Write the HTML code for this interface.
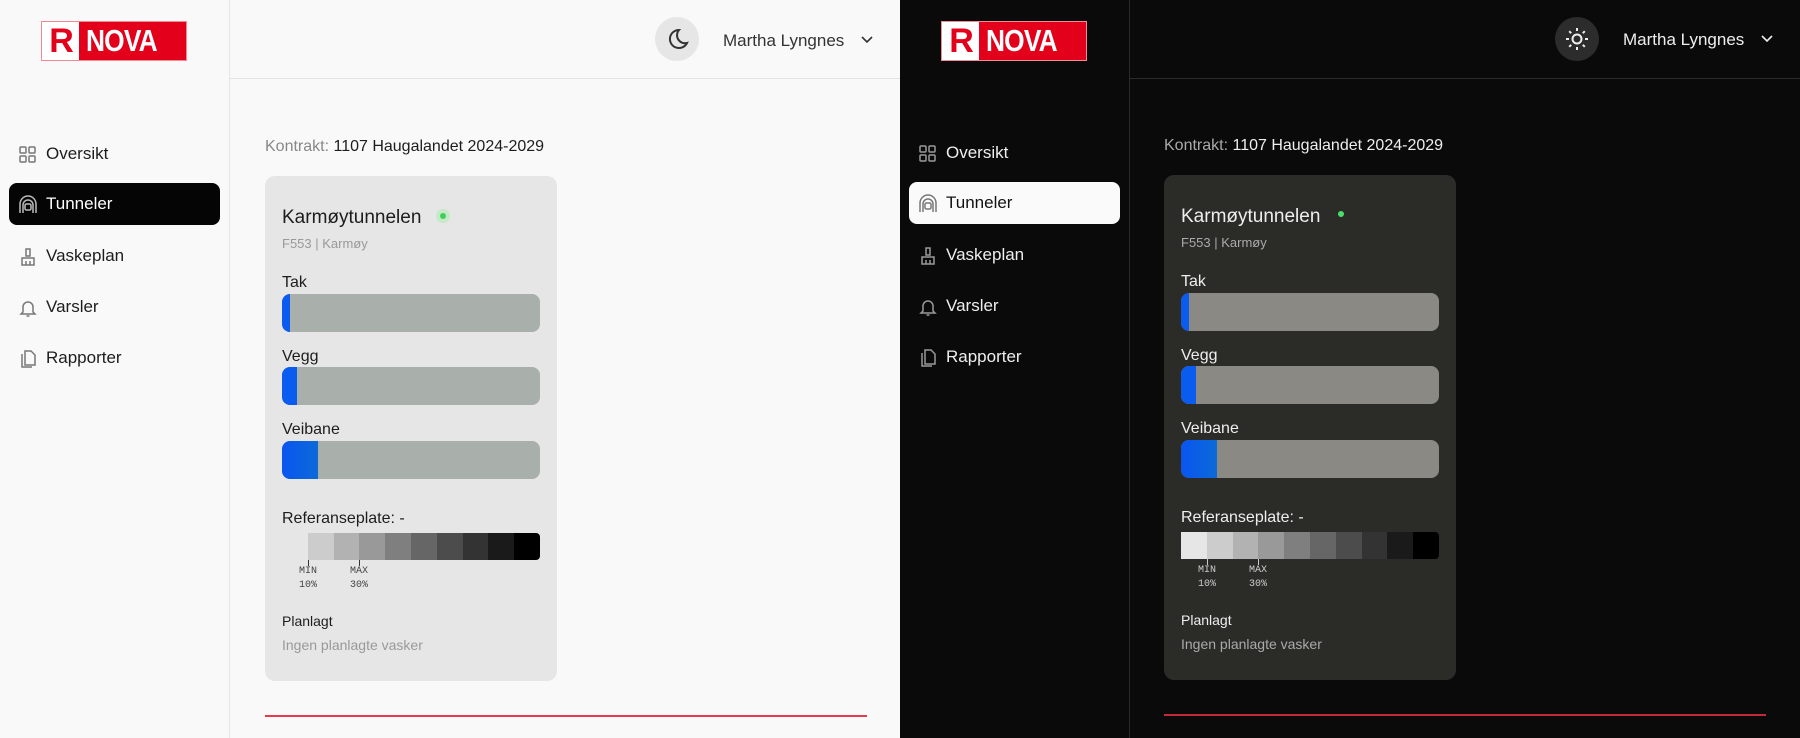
<!DOCTYPE html>
<html><head><meta charset="utf-8"><style>
*{box-sizing:border-box;margin:0;padding:0}
body{width:1800px;height:738px;overflow:hidden;font-family:"Liberation Sans",sans-serif;position:relative}
.p{position:absolute;top:0;width:900px;height:738px;overflow:hidden}
.a{position:absolute;white-space:nowrap}
.l{background:#f9f9f9;color:#1d1d1d}
.d{background:#0a0a0a;color:#eee}
.sb{position:absolute;left:0;top:0;width:230px;height:738px;border-right:1px solid #e6e6e6}
.d .sb{border-right-color:#2a2a2a}
.hd{position:absolute;left:230px;right:0;top:78px;height:1px;background:#e3e3e3}
.d .hd{background:#2a2a2a}
.logo{position:absolute;left:41px;top:21px;width:146px;height:40px;background:#e2001a;border:1px solid #f08a95}
.logo .r{position:absolute;left:0;top:0;width:37px;height:38px;background:#fff;color:#e2001a;font:bold 34px/38px "Liberation Sans";text-align:center;letter-spacing:-2px}
.logo .n{position:absolute;left:44px;top:0;color:#fff;font:bold 31px/38px "Liberation Sans";letter-spacing:-1px;transform:scaleX(.85);transform-origin:left}
.btn{position:absolute;left:655px;top:17px;width:44px;height:44px;border-radius:50%;background:#e6e6e6}
.d .btn{background:#2c2c2c}
.nav{position:absolute;left:9px;width:211px;height:42px;border-radius:8px;font-size:17px;line-height:42px;padding-left:37px}
.nav svg{position:absolute;left:9px;top:12px}
.l .act{background:#050505;color:#fff}
.d .act{background:#fafafa;color:#111}
.card{position:absolute;left:265px;top:176px;width:292px;height:505px;border-radius:10px;background:#e5e6e5}
.d .card{background:#2b2b28}
.bar{position:absolute;left:17px;width:258px;height:38px;border-radius:8px;background:#a9afab;overflow:hidden}
.d .bar{background:#8a8984}
.bar i{position:absolute;left:0;top:0;bottom:0;background:#0a5cf0}
.lbl{position:absolute;left:17px;font-size:16px}
.gs{position:absolute;left:17px;top:357px;width:258px;height:27px;display:flex;border-radius:0 4px 4px 0;overflow:hidden}
.gs span{flex:1}
.sm{font-family:"Liberation Mono",monospace;font-size:10px;color:#444;text-align:center;line-height:14px}
.d .sm{color:#ccc}
.red{position:absolute;left:265px;top:715px;width:602px;height:2px;background:#e8394d}
</style></head><body>

<!-- LIGHT -->
<div class="p l" style="left:0">
 <div class="sb"></div><div class="hd"></div>
 <div class="logo"><div class="r">R</div><div class="n">NOVA</div></div>
 <div class="btn"><svg width="44" height="44" viewBox="0 0 44 44"><path d="M24 13a9 9 0 1 0 8 13a8 8 0 0 1 -8 -13z" fill="none" stroke="#333" stroke-width="2"/></svg></div>
 <div class="a" style="left:723px;top:31px;font-size:17px;color:#333">Martha Lyngnes</div>
 <svg class="a" style="left:861px;top:36px" width="12" height="8"><path d="M1 1l5 5 5-5" fill="none" stroke="#333" stroke-width="1.6"/></svg>
 <div class="nav" style="top:133px"><svg width="20" height="20"><g fill="none" stroke="#777" stroke-width="1.5"><rect x="2" y="2" width="6" height="6" rx="1"/><rect x="11" y="2" width="6" height="6" rx="1"/><rect x="2" y="11" width="6" height="6" rx="1"/><rect x="11" y="11" width="6" height="6" rx="1"/></g></svg>Oversikt</div>
 <div class="nav act" style="top:183px"><svg width="20" height="20"><g fill="none" stroke="#bbb" stroke-width="1.5"><path d="M2 18V9a8 8 0 0 1 16 0v9"/><path d="M5 18V10a5 5 0 0 1 10 0v8"/><rect x="7" y="9" width="6" height="6" rx="1.5"/></g></svg>Tunneler</div>
 <div class="nav" style="top:235px"><svg width="20" height="20"><g fill="none" stroke="#777" stroke-width="1.5"><path d="M8 2h4v7H8z"/><path d="M4 11h12v7H4z"/><path d="M8 14v4M12 14v4"/></g></svg>Vaskeplan</div>
 <div class="nav" style="top:286px"><svg width="20" height="20"><g fill="none" stroke="#777" stroke-width="1.5"><path d="M5 14V9a5 5 0 0 1 10 0v5l2 2H3z"/><path d="M8.5 18h3"/></g></svg>Varsler</div>
 <div class="nav" style="top:337px"><svg width="20" height="20"><g fill="none" stroke="#777" stroke-width="1.5"><path d="M7 2h6l4 4v10H7z"/><path d="M4 5v13h10"/></g></svg>Rapporter</div>
 <div class="a" style="left:265px;top:138px;font-size:16px"><span style="color:#888">Kontrakt:</span> 1107 Haugalandet 2024-2029</div>
 <div class="card">
  <div class="a" style="left:17px;top:31px;font-size:19px">Karmøytunnelen</div>
  <div class="a" style="left:171px;top:33px;width:14px;height:14px;border-radius:50%;background:#c5e9c9"><div style="margin:4px;width:6px;height:6px;border-radius:50%;background:#3fcf5a"></div></div>
  <div class="a" style="left:17px;top:60px;font-size:13px;color:#999">F553 | Karmøy</div>
  <div class="lbl" style="top:98px">Tak</div>
  <div class="bar" style="top:118px"><i style="width:8px"></i></div>
  <div class="lbl" style="top:172px">Vegg</div>
  <div class="bar" style="top:191px"><i style="width:15px"></i></div>
  <div class="lbl" style="top:245px">Veibane</div>
  <div class="bar" style="top:265px"><i style="width:36px;background:linear-gradient(90deg,#0a55f0,#0c6ad8)"></i></div>
  <div class="lbl" style="top:334px">Referanseplate: -</div>
  <div class="gs"><span style="background:#e6e6e6"></span><span style="background:#cccccc"></span><span style="background:#b2b2b2"></span><span style="background:#999"></span><span style="background:#7f7f7f"></span><span style="background:#666"></span><span style="background:#4c4c4c"></span><span style="background:#333"></span><span style="background:#1a1a1a"></span><span style="background:#000"></span></div>
  <div class="a" style="left:43px;top:384px;width:1px;height:6px;background:#333"></div>
  <div class="a" style="left:94px;top:384px;width:1px;height:6px;background:#333"></div>
  <div class="a sm" style="left:28px;top:389px;width:30px">MIN<br>10%</div>
  <div class="a sm" style="left:79px;top:389px;width:30px">MAX<br>30%</div>
  <div class="a" style="left:17px;top:437px;font-size:14px">Planlagt</div>
  <div class="a" style="left:17px;top:461px;font-size:14px;color:#999">Ingen planlagte vasker</div>
 </div>
 <div class="red"></div>
</div>

<!-- DARK -->
<div class="p d" style="left:900px">
 <div class="sb"></div><div class="hd" style="top:78px"></div>
 <div class="logo"><div class="r">R</div><div class="n">NOVA</div></div>
 <div class="btn"><svg width="44" height="44" viewBox="0 0 44 44"><g fill="none" stroke="#eee" stroke-width="2"><circle cx="22" cy="22" r="4.5"/><path d="M22 11v3M22 30v3M11 22h3M30 22h3M14.2 14.2l2 2M27.8 27.8l2 2M14.2 29.8l2-2M27.8 16.2l2-2"/></g></svg></div>
 <div class="a" style="left:723px;top:30px;font-size:17px;color:#eee">Martha Lyngnes</div>
 <svg class="a" style="left:861px;top:35px" width="12" height="8"><path d="M1 1l5 5 5-5" fill="none" stroke="#eee" stroke-width="1.6"/></svg>
 <div class="nav" style="top:132px"><svg width="20" height="20"><g fill="none" stroke="#999" stroke-width="1.5"><rect x="2" y="2" width="6" height="6" rx="1"/><rect x="11" y="2" width="6" height="6" rx="1"/><rect x="2" y="11" width="6" height="6" rx="1"/><rect x="11" y="11" width="6" height="6" rx="1"/></g></svg>Oversikt</div>
 <div class="nav act" style="top:182px"><svg width="20" height="20"><g fill="none" stroke="#777" stroke-width="1.5"><path d="M2 18V9a8 8 0 0 1 16 0v9"/><path d="M5 18V10a5 5 0 0 1 10 0v8"/><rect x="7" y="9" width="6" height="6" rx="1.5"/></g></svg>Tunneler</div>
 <div class="nav" style="top:234px"><svg width="20" height="20"><g fill="none" stroke="#999" stroke-width="1.5"><path d="M8 2h4v7H8z"/><path d="M4 11h12v7H4z"/><path d="M8 14v4M12 14v4"/></g></svg>Vaskeplan</div>
 <div class="nav" style="top:285px"><svg width="20" height="20"><g fill="none" stroke="#999" stroke-width="1.5"><path d="M5 14V9a5 5 0 0 1 10 0v5l2 2H3z"/><path d="M8.5 18h3"/></g></svg>Varsler</div>
 <div class="nav" style="top:336px"><svg width="20" height="20"><g fill="none" stroke="#999" stroke-width="1.5"><path d="M7 2h6l4 4v10H7z"/><path d="M4 5v13h10"/></g></svg>Rapporter</div>
 <div class="a" style="left:264px;top:137px;font-size:16px"><span style="color:#aaa">Kontrakt:</span> 1107 Haugalandet 2024-2029</div>
 <div class="card" style="top:175px;left:264px">
  <div class="a" style="left:17px;top:31px;font-size:19px">Karmøytunnelen</div>
  <div class="a" style="left:174px;top:36px;width:6px;height:6px;border-radius:50%;background:#4ade6a"></div>
  <div class="a" style="left:17px;top:60px;font-size:13px;color:#aaa">F553 | Karmøy</div>
  <div class="lbl" style="top:98px">Tak</div>
  <div class="bar" style="top:118px"><i style="width:8px"></i></div>
  <div class="lbl" style="top:172px">Vegg</div>
  <div class="bar" style="top:191px"><i style="width:15px"></i></div>
  <div class="lbl" style="top:245px">Veibane</div>
  <div class="bar" style="top:265px"><i style="width:36px;background:linear-gradient(90deg,#0a55f0,#0c6ad8)"></i></div>
  <div class="lbl" style="top:334px">Referanseplate: -</div>
  <div class="gs"><span style="background:#e6e6e6"></span><span style="background:#cccccc"></span><span style="background:#b2b2b2"></span><span style="background:#999"></span><span style="background:#7f7f7f"></span><span style="background:#666"></span><span style="background:#4c4c4c"></span><span style="background:#333"></span><span style="background:#1a1a1a"></span><span style="background:#000"></span></div>
  <div class="a" style="left:43px;top:384px;width:1px;height:6px;background:#ccc"></div>
  <div class="a" style="left:94px;top:384px;width:1px;height:6px;background:#ccc"></div>
  <div class="a sm" style="left:28px;top:389px;width:30px">MIN<br>10%</div>
  <div class="a sm" style="left:79px;top:389px;width:30px">MAX<br>30%</div>
  <div class="a" style="left:17px;top:437px;font-size:14px">Planlagt</div>
  <div class="a" style="left:17px;top:461px;font-size:14px;color:#aaa">Ingen planlagte vasker</div>
 </div>
 <div class="red" style="top:714px;left:264px;background:#c02a3a"></div>
</div>
</body></html>
